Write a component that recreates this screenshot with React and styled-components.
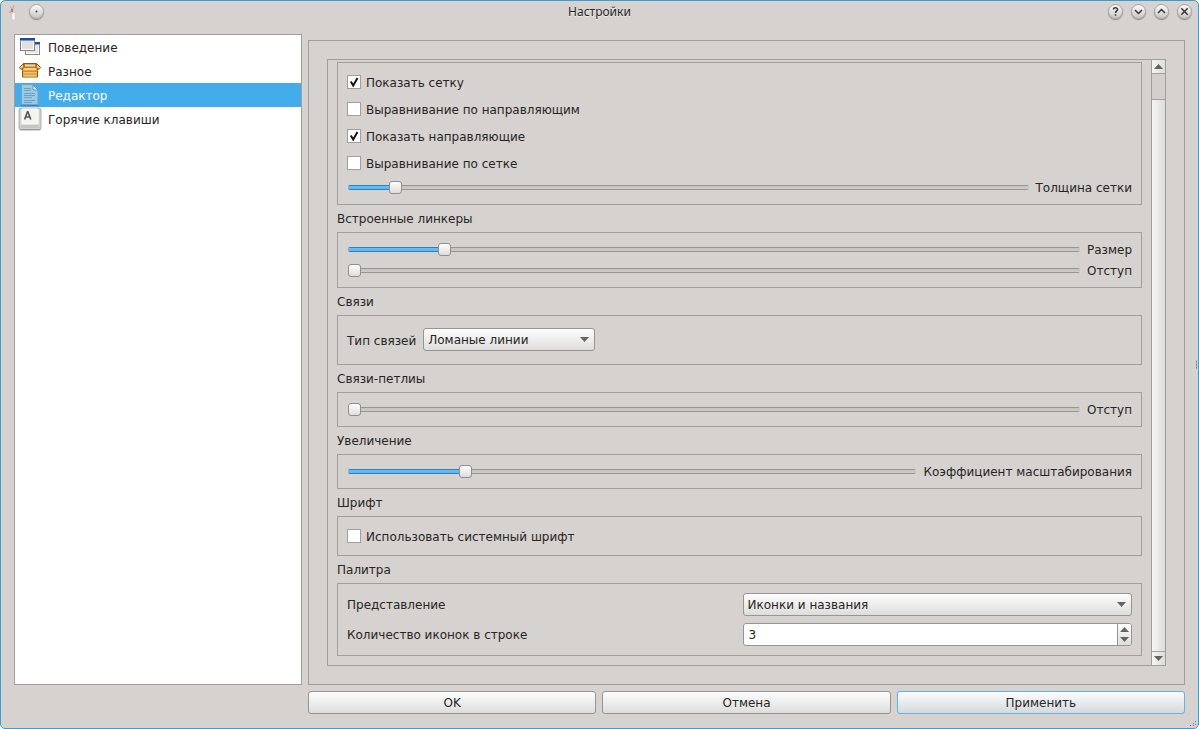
import React, { useId, useState } from "react";
import styled, { createGlobalStyle, css } from "styled-components";

const GlobalStyle = createGlobalStyle`
  *, *::before, *::after { box-sizing: border-box; }
  body {
    margin: 0;
    background: #fff;
    color: #272523;
    font: 12px/16px "DejaVu Sans", Verdana, sans-serif;
  }
  button, input, select { font: inherit; color: inherit; margin: 0; }
`;

const line = "#a19e9b";
const face = "#d6d2cf";
const raised = css`
  background: linear-gradient(#fdfdfd, #dedddc);
`;

const Window = styled.div`
  display: flex;
  flex-direction: column;
  min-height: 100vh;
  position: relative;
  background: ${face};
  border: 1px solid #439bcb;
  border-radius: 5px;
`;

const TitleBar = styled.header`
  display: grid;
  grid-template-columns: 1fr auto 1fr;
  align-items: center;
  height: 21px;
  padding: 0 6px;
  margin-bottom: 12px;
`;

const Title = styled.h1`
  margin: 0;
  font-family: "Noto Sans", sans-serif;
  font-size: 12px;
  font-weight: normal;
  text-shadow: 0 1px 1px #f4f2f0;
`;

const TitleSide = styled.div`
  display: flex;
  align-items: center;
  gap: ${(p) => (p.$end ? 8 : 12)}px;
  justify-content: ${(p) => (p.$end ? "flex-end" : "flex-start")};
`;

const RoundButton = styled.button`
  display: grid;
  place-items: center;
  width: 15px;
  height: 15px;
  padding: 0;
  border: 1px solid #a5a3a1;
  border-radius: 50%;
  background: linear-gradient(#fbfaf9, #c9c7c4);
  box-shadow: 0 1px 1px #8b8986;
`;

const Main = styled.main`
  flex: 1;
  display: grid;
  grid-template-columns: 288px minmax(0, 1fr);
  grid-template-rows: 1fr auto;
  gap: 6px;
  padding: 0 13px 14px;
`;

const Sidebar = styled.nav`
  background: #fff;
  border: 1px solid ${line};
`;

const NavItem = styled.a`
  display: flex;
  align-items: center;
  gap: 6px;
  height: 24px;
  padding-left: 3px;
  text-decoration: none;
  color: ${(p) => (p.$active ? "#fff" : "#272523")};
  background: ${(p) => (p.$active ? "#43aceb" : "transparent")};
`;

const Caption = styled.span`
  padding-top: 2px;
`;

const Panel = styled.section`
  display: flex;
  margin-top: 6px;
  padding: 18px;
  border: 1px solid ${line};
`;

const ScrollFrame = styled.div`
  flex: 1;
  min-width: 0;
  display: flex;
  border: 1px solid ${line};
  border-right: 0;
`;

const Form = styled.form`
  flex: 1;
  min-width: 0;
  padding: 2px 9px 9px;
`;

const Group = styled.fieldset`
  display: flex;
  flex-direction: column;
  gap: ${(p) => p.$gap || 0}px;
  min-width: 0;
  margin: 0;
  padding: 6px 9px;
  border: 1px solid ${line};
`;

const GroupTitle = styled.h2`
  margin: 0;
  padding-top: 2px;
  font-size: 12px;
  font-weight: normal;
  line-height: 25px;
`;

const CheckRow = styled.label`
  display: flex;
  align-items: center;
  gap: 5px;
  height: 26px;
`;

const CheckBox = styled.span`
  display: grid;
  width: 14px;
  height: 14px;

  input, svg { grid-area: 1 / 1; }
  input {
    appearance: none;
    width: 14px;
    height: 14px;
    background: #fff;
    border: 1px solid ${line};
  }
  svg { visibility: hidden; pointer-events: none; }
  input:checked + svg { visibility: visible; }
`;

const SliderRow = styled.div`
  display: flex;
  align-items: center;
  gap: 7px;
  height: 21px;
  padding-left: 1px;
`;

const track = css`
  height: 5px;
  border-radius: 2px;
  background:
    linear-gradient(#2b83b9 1px, #69bff7 1px, #5ab5f0 4px, #2b83b9 4px) 0 0 / calc((100% - 13px) * ${(p) => p.$ratio} + 6px) 100% no-repeat,
    linear-gradient(#979593 1px, #c4c1be 1px, #cecbc8 4px, #979593 4px);
`;
const thumb = css`
  width: 13px;
  height: 13px;
  border: 1px solid #918f8d;
  border-radius: 3px;
  ${raised}
`;
const Range = styled.input.attrs({ type: "range" })`
  appearance: none;
  flex: 1;
  min-width: 0;
  height: 13px;
  background: transparent;

  &::-webkit-slider-runnable-track { ${track} }
  &::-moz-range-track { ${track} }
  &::-webkit-slider-thumb { appearance: none; margin-top: -4px; ${thumb} }
  &::-moz-range-thumb { ${thumb} }
`;

const InlineField = styled.div`
  display: flex;
  align-items: center;
  gap: 7px;
  height: 36px;
  padding-bottom: 1px;
`;

const FieldRow = styled.div`
  display: grid;
  grid-template-columns: 1fr 1fr;
  align-items: center;
  gap: 6px;
  height: 29px;
`;

const SelectBox = styled.div`
  display: grid;
  align-items: center;
  width: ${(p) => p.$width || "100%"};

  select, svg { grid-area: 1 / 1; }
  select {
    appearance: none;
    width: 100%;
    height: 23px;
    padding: 0 20px 0 4px;
    border: 1px solid #979593;
    border-radius: 3px;
    ${raised}
  }
  svg { justify-self: end; margin-right: 6px; pointer-events: none; }
`;

const Spin = styled.div`
  display: flex;
  height: 23px;
  border: 1px solid #979593;
  border-radius: 3px;
  overflow: hidden;
  background: #fff;

  input {
    appearance: textfield;
    flex: 1;
    min-width: 0;
    padding: 0 5px;
    border: 0;
    background: transparent;
  }
  input::-webkit-inner-spin-button { appearance: none; }
`;

const SpinButtons = styled.div`
  display: grid;
  width: 14px;
  border-left: 1px solid #979593;
  ${raised}

  button {
    display: grid;
    place-items: center;
    padding: 0;
    border: 0;
    background: none;
  }
`;

const ScrollBar = styled.div`
  display: flex;
  flex-direction: column;
  width: 15px;
  border: solid ${line};
  border-width: 0 1px;
  background: #d2cfcc;
`;

const ScrollButton = styled.button`
  display: grid;
  place-items: center;
  height: 14px;
  padding: 0;
  border: solid ${line};
  border-width: ${(p) => (p.$up ? "0 0 1px" : "1px 0 0")};
  background: linear-gradient(90deg, #f5f5f4, #dddcdb);
`;

const ScrollThumb = styled.div`
  flex: 1;
  margin-top: 25px;
  border-top: 1px solid ${line};
  background: linear-gradient(90deg, #f5f5f4, #dddcdb);
`;

const Actions = styled.footer`
  grid-column: 2;
  display: flex;
  gap: 6px;
`;

const PushButton = styled.button`
  flex: 1;
  height: 23px;
  padding: 0;
  border: 1px solid ${(p) => (p.$focus ? "#62b3e4" : "#979593")};
  border-radius: 3px;
  background: ${(p) => (p.$focus ? "linear-gradient(#fcfdfd, #d4d9dd)" : "linear-gradient(#fdfdfd, #dedddc)")};
`;

const EdgeGrip = styled.svg`
  position: absolute;
  right: 0;
  top: 50%;
  transform: translateY(-50%);
`;
const CornerGrip = styled.svg`
  position: absolute;
  right: 0;
  bottom: 0;
`;

const Arrow = ({ up }) => (
  <svg width="9" height="5" viewBox="0 0 9 5" aria-hidden="true">
    <path d={up ? "M0 5 4.500 0 9 5z" : "M0 0h9L4.500 5z"} fill="#666361" />
  </svg>
);

const Glyph = ({ d }) => (
  <svg width="13" height="13" viewBox="0 0 13 13" fill="none" stroke="#373533" strokeWidth="1.500" aria-hidden="true">
    <path d={d} />
  </svg>
);

const WindowsIcon = () => (
  <svg width="24" height="24" viewBox="0 0 24 24" aria-hidden="true">
    <rect x="7.500" y="7.500" width="14" height="12" fill="#e6e6e3" stroke="#8b8b89" />
    <rect x="8.500" y="9.500" width="12" height="9" fill="none" stroke="#fff" />
    <path d="M7 7h15v2H7z" fill="#23549b" />
    <path d="M8 9h13v1H8z" fill="#75a4da" />
    <rect x="2.500" y="3.500" width="14" height="12" fill="#e0e0dc" stroke="#83837f" />
    <rect x="3.500" y="5.500" width="12" height="9" fill="none" stroke="#fff" />
    <path d="M2 3h15v2H2z" fill="#1e4d94" />
    <path d="M3 5h13v1H3z" fill="#6b9dd5" />
  </svg>
);

const BoxIcon = () => (
  <svg width="24" height="24" viewBox="0 0 24 24" aria-hidden="true" strokeLinejoin="round">
    <path d="M4.500 8.500h15v9.500h-15z" fill="#e5a643" stroke="#8f5608" />
    <path d="M5.500 4.500h13l1.500 4.500H4z" fill="#c48734" stroke="#8f5608" />
    <path d="M7 5.500h10v2H7z" fill="#ecd3a7" />
    <path d="M5.500 4.500 1.500 8.500l1.500 2 3-2.500zM18.500 4.500l4 4-1.500 2-3-2.500z" fill="#f8cb7d" stroke="#8f5608" />
    <path d="M5.500 8.500h13l1 3.500h-15z" fill="#ffd28a" stroke="#b77a26" />
    <path d="M5.500 13.500h13" stroke="#f7c269" />
    <path d="M5.500 17h13" stroke="#ffd58a" />
  </svg>
);

const DocumentIcon = () => (
  <svg width="24" height="24" viewBox="0 0 24 24" aria-hidden="true">
    <path d="M3 22.500h18" stroke="#3b86b5" />
    <path d="M3.500 1.500H15l5 5v15H3.500z" fill="#9bcae6" stroke="#6ba4c5" />
    <path d="M15 2v5h5z" fill="#d8ebf5" stroke="#4f88a8" strokeWidth=".8" />
    <path d="M6 5.500h7M6 7.500h7M6 10.500h11M6 12.500h11M6 14.500h8M6 17.500h11M6 19.500h8" stroke="#6ba2c2" />
  </svg>
);

const KeyIcon = () => (
  <svg width="24" height="24" viewBox="0 0 24 24" aria-hidden="true">
    <rect x="1" y="1" width="22" height="22" rx="2" fill="#d3d3d2" stroke="#a1a1a0" strokeWidth=".8" />
    <path d="M2 22.500h20" stroke="#969695" />
    <path d="M2 21l3-4h14l3 4z" fill="#c4c4c3" />
    <rect x="4" y="2" width="16" height="15" rx="1" fill="#f3f3f2" stroke="#fff" />
    <path d="M6.600 12.500 9.500 4.800h.4l2.900 7.700M7.600 10h4.200" fill="none" stroke="#555" strokeWidth="1.600" />
  </svg>
);

const AppIcon = () => (
  <svg width="10" height="16" viewBox="0 0 10 16" aria-hidden="true">
    <path d="M3 2l3 5M7 1 5 7" stroke="#b3aeab" fill="none" />
    <path d="M4 5h2v3H4z" fill="#cb6f6f" />
    <path d="M5 9h3v7H5z" fill="#fff" stroke="#bbb" strokeWidth=".5" />
    <path d="M2 8h2" stroke="#999" />
  </svg>
);

function Check({ label, on }) {
  return (
    <CheckRow>
      <CheckBox>
        <input type="checkbox" defaultChecked={on} />
        <svg width="14" height="14" viewBox="0 0 14 14" aria-hidden="true">
          <path d="M3.800 6.500l2.400 4L10.500 3" fill="none" stroke="#151515" strokeWidth="2" />
        </svg>
      </CheckBox>
      <Caption>{label}</Caption>
    </CheckRow>
  );
}

function Slider({ label, start }) {
  const id = useId();
  const [value, setValue] = useState(start);
  return (
    <SliderRow>
      <Range
        id={id}
        min="0"
        max="1000"
        value={value}
        $ratio={value / 1000}
        onChange={(e) => setValue(Number(e.target.value))}
      />
      <label htmlFor={id}>{label}</label>
    </SliderRow>
  );
}

function Combo({ id, option, width }) {
  return (
    <SelectBox $width={width}>
      <select id={id}>
        <option>{option}</option>
      </select>
      <Arrow />
    </SelectBox>
  );
}

const sections = [
  { title: "Поведение", Icon: WindowsIcon },
  { title: "Разное", Icon: BoxIcon },
  { title: "Редактор", Icon: DocumentIcon, active: true },
  { title: "Горячие клавиши", Icon: KeyIcon },
];

export default function App() {
  const [count, setCount] = useState(3);
  return (
    <>
      <GlobalStyle />
      <Window>
        <TitleBar>
          <TitleSide>
            <AppIcon />
            <RoundButton aria-label="Меню окна">
              <svg width="13" height="13" viewBox="0 0 13 13" aria-hidden="true">
                <circle cx="6.500" cy="6.500" r="1" fill="#444" />
              </svg>
            </RoundButton>
          </TitleSide>
          <Title>Настройки</Title>
          <TitleSide $end>
            <RoundButton aria-label="Справка">
              <Glyph d="M4.300 4.500C4.500 2.200 8.700 2.300 8.600 4.500 8.500 5.900 6.500 5.800 6.500 8M6.500 9.200v1.600" />
            </RoundButton>
            <RoundButton aria-label="Свернуть">
              <Glyph d="M3 5l3.500 3.500L10 5" />
            </RoundButton>
            <RoundButton aria-label="Развернуть">
              <Glyph d="M3 8l3.500-3.500L10 8" />
            </RoundButton>
            <RoundButton aria-label="Закрыть">
              <Glyph d="M3.300 3.300l6.400 6.400M9.700 3.300L3.300 9.700" />
            </RoundButton>
          </TitleSide>
        </TitleBar>

        <Main>
          <Sidebar>
            {sections.map(({ title, Icon, active }) => (
              <NavItem key={title} href="#" $active={active} aria-current={active ? "page" : undefined}>
                <Icon />
                <Caption>{title}</Caption>
              </NavItem>
            ))}
          </Sidebar>

          <Panel>
            <ScrollFrame>
              <Form>
                <Group $gap={1}>
                  <Check label="Показать сетку" on />
                  <Check label="Выравнивание по направляющим" />
                  <Check label="Показать направляющие" on />
                  <Check label="Выравнивание по сетке" />
                  <Slider label="Толщина сетки" start={62} />
                </Group>

                <GroupTitle>Встроенные линкеры</GroupTitle>
                <Group>
                  <Slider label="Размер" start={125} />
                  <Slider label="Отступ" start={0} />
                </Group>

                <GroupTitle>Связи</GroupTitle>
                <Group>
                  <InlineField>
                    <Caption as="label" htmlFor="link-type">Тип связей</Caption>
                    <Combo id="link-type" option="Ломаные линии" width="172px" />
                  </InlineField>
                </Group>

                <GroupTitle>Связи-петлиы</GroupTitle>
                <Group>
                  <Slider label="Отступ" start={0} />
                </Group>

                <GroupTitle>Увеличение</GroupTitle>
                <Group>
                  <Slider label="Коэффициент масштабирования" start={200} />
                </Group>

                <GroupTitle>Шрифт</GroupTitle>
                <Group>
                  <Check label="Использовать системный шрифт" />
                </Group>

                <GroupTitle>Палитра</GroupTitle>
                <Group $gap={1}>
                  <FieldRow>
                    <label htmlFor="view">Представление</label>
                    <Combo id="view" option="Иконки и названия" />
                  </FieldRow>
                  <FieldRow>
                    <label htmlFor="count">Количество иконок в строке</label>
                    <Spin>
                      <input
                        id="count"
                        type="number"
                        value={count}
                        onChange={(e) => setCount(Number(e.target.value))}
                      />
                      <SpinButtons>
                        <button type="button" aria-label="Больше" onClick={() => setCount(count + 1)}>
                          <Arrow up />
                        </button>
                        <button type="button" aria-label="Меньше" onClick={() => setCount(count - 1)}>
                          <Arrow />
                        </button>
                      </SpinButtons>
                    </Spin>
                  </FieldRow>
                </Group>
              </Form>
              <ScrollBar>
                <ScrollButton $up type="button" aria-label="Прокрутить вверх">
                  <Arrow up />
                </ScrollButton>
                <ScrollThumb />
                <ScrollButton type="button" aria-label="Прокрутить вниз">
                  <Arrow />
                </ScrollButton>
              </ScrollBar>
            </ScrollFrame>
          </Panel>

          <Actions>
            <PushButton>OK</PushButton>
            <PushButton>Отмена</PushButton>
            <PushButton $focus>Применить</PushButton>
          </Actions>
        </Main>

        <EdgeGrip width="2" height="9" viewBox="0 0 2 9" aria-hidden="true">
          <path d="M0 0h1v2H0zM0 3h1v2H0zM0 6h1v2H0z" fill="#77746f" />
        </EdgeGrip>
        <CornerGrip width="8" height="8" viewBox="0 0 8 8" aria-hidden="true">
          <path d="M0 5h1v1H0zM3 5h1v1H3zM3 3h1v1H3zM5 1h1v1H5zM5 4h1v1H5z" fill="#77746f" />
        </CornerGrip>
      </Window>
    </>
  );
}
